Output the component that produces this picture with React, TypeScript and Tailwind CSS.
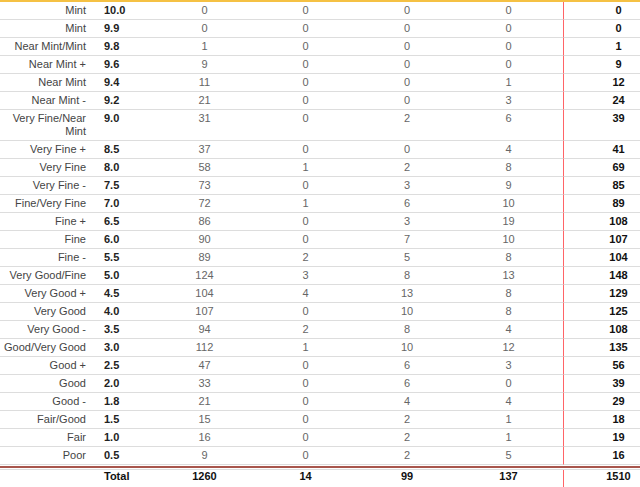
const rows: [string, string, number, number, number, number, number][] = [
  ["Mint", "10.0", 0, 0, 0, 0, 0],
  ["Mint", "9.9", 0, 0, 0, 0, 0],
  ["Near Mint/Mint", "9.8", 1, 0, 0, 0, 1],
  ["Near Mint +", "9.6", 9, 0, 0, 0, 9],
  ["Near Mint", "9.4", 11, 0, 0, 1, 12],
  ["Near Mint -", "9.2", 21, 0, 0, 3, 24],
  ["Very Fine/Near Mint", "9.0", 31, 0, 2, 6, 39],
  ["Very Fine +", "8.5", 37, 0, 0, 4, 41],
  ["Very Fine", "8.0", 58, 1, 2, 8, 69],
  ["Very Fine -", "7.5", 73, 0, 3, 9, 85],
  ["Fine/Very Fine", "7.0", 72, 1, 6, 10, 89],
  ["Fine +", "6.5", 86, 0, 3, 19, 108],
  ["Fine", "6.0", 90, 0, 7, 10, 107],
  ["Fine -", "5.5", 89, 2, 5, 8, 104],
  ["Very Good/Fine", "5.0", 124, 3, 8, 13, 148],
  ["Very Good +", "4.5", 104, 4, 13, 8, 129],
  ["Very Good", "4.0", 107, 0, 10, 8, 125],
  ["Very Good -", "3.5", 94, 2, 8, 4, 108],
  ["Good/Very Good", "3.0", 112, 1, 10, 12, 135],
  ["Good +", "2.5", 47, 0, 6, 3, 56],
  ["Good", "2.0", 33, 0, 6, 0, 39],
  ["Good -", "1.8", 21, 0, 4, 4, 29],
  ["Fair/Good", "1.5", 15, 0, 2, 1, 18],
  ["Fair", "1.0", 16, 0, 2, 1, 19],
  ["Poor", "0.5", 9, 0, 2, 5, 16],
]

function Cols() {
  return (
    <colgroup>
      <col className="w-[90px]" />
      <col className="w-[64px]" />
      <col className="w-[101px]" />
      <col className="w-[101px]" />
      <col className="w-[102px]" />
      <col className="w-[105px]" />
      <col className="w-[110px]" />
    </colgroup>
  )
}

const cell = "py-[2px] border-b border-b-[#dddddd]"
const redLeft = "border-l border-solid border-l-red-400"

export default function App() {
  return (
    <div
      className="w-[640px] h-[487px] overflow-hidden bg-white text-[11px] leading-[13px]"
      style={{ fontFamily: '"Liberation Sans", Arial, sans-serif' }}
    >
      <div className="h-[2px] w-[673px] bg-[#f5c144]"></div>
      <table className="table-fixed border-separate border-spacing-0 w-[673px]">
        <Cols />
        <tbody>
          {rows.map((r, i) => (
            <tr key={i} className="align-top">
              <td className={`${cell} pl-[2px] pr-1 text-right text-[#444444]`}>{r[0]}</td>
              <td className={`${cell} pl-[14px] font-bold text-[#222222]`}>{r[1]}</td>
              <td className={`${cell} text-center text-[#666666]`}>{r[2]}</td>
              <td className={`${cell} text-center text-[#666666]`}>{r[3]}</td>
              <td className={`${cell} text-center text-[#666666]`}>{r[4]}</td>
              <td className={`${cell} pr-1 text-center text-[#666666]`}>{r[5]}</td>
              <td className={`${cell} ${redLeft} text-center font-bold text-[#111111]`}>{r[6]}</td>
            </tr>
          ))}
        </tbody>
      </table>
      <div className="mt-[1px] h-[2px] w-[673px] bg-[#a8564d]"></div>
      <table className="mt-[1px] table-fixed border-separate border-spacing-0 w-[673px] border-t border-t-[#dddddd]">
        <Cols />
        <tbody>
          <tr className="align-top font-bold text-[#111111]">
            <td className="pl-[2px] pr-1"></td>
            <td className="pl-[14px]">Total</td>
            <td className="text-center">1260</td>
            <td className="text-center">14</td>
            <td className="text-center">99</td>
            <td className="pr-1 text-center">137</td>
            <td className={`${redLeft} h-[20px] text-center`}>1510</td>
          </tr>
        </tbody>
      </table>
    </div>
  )
}
